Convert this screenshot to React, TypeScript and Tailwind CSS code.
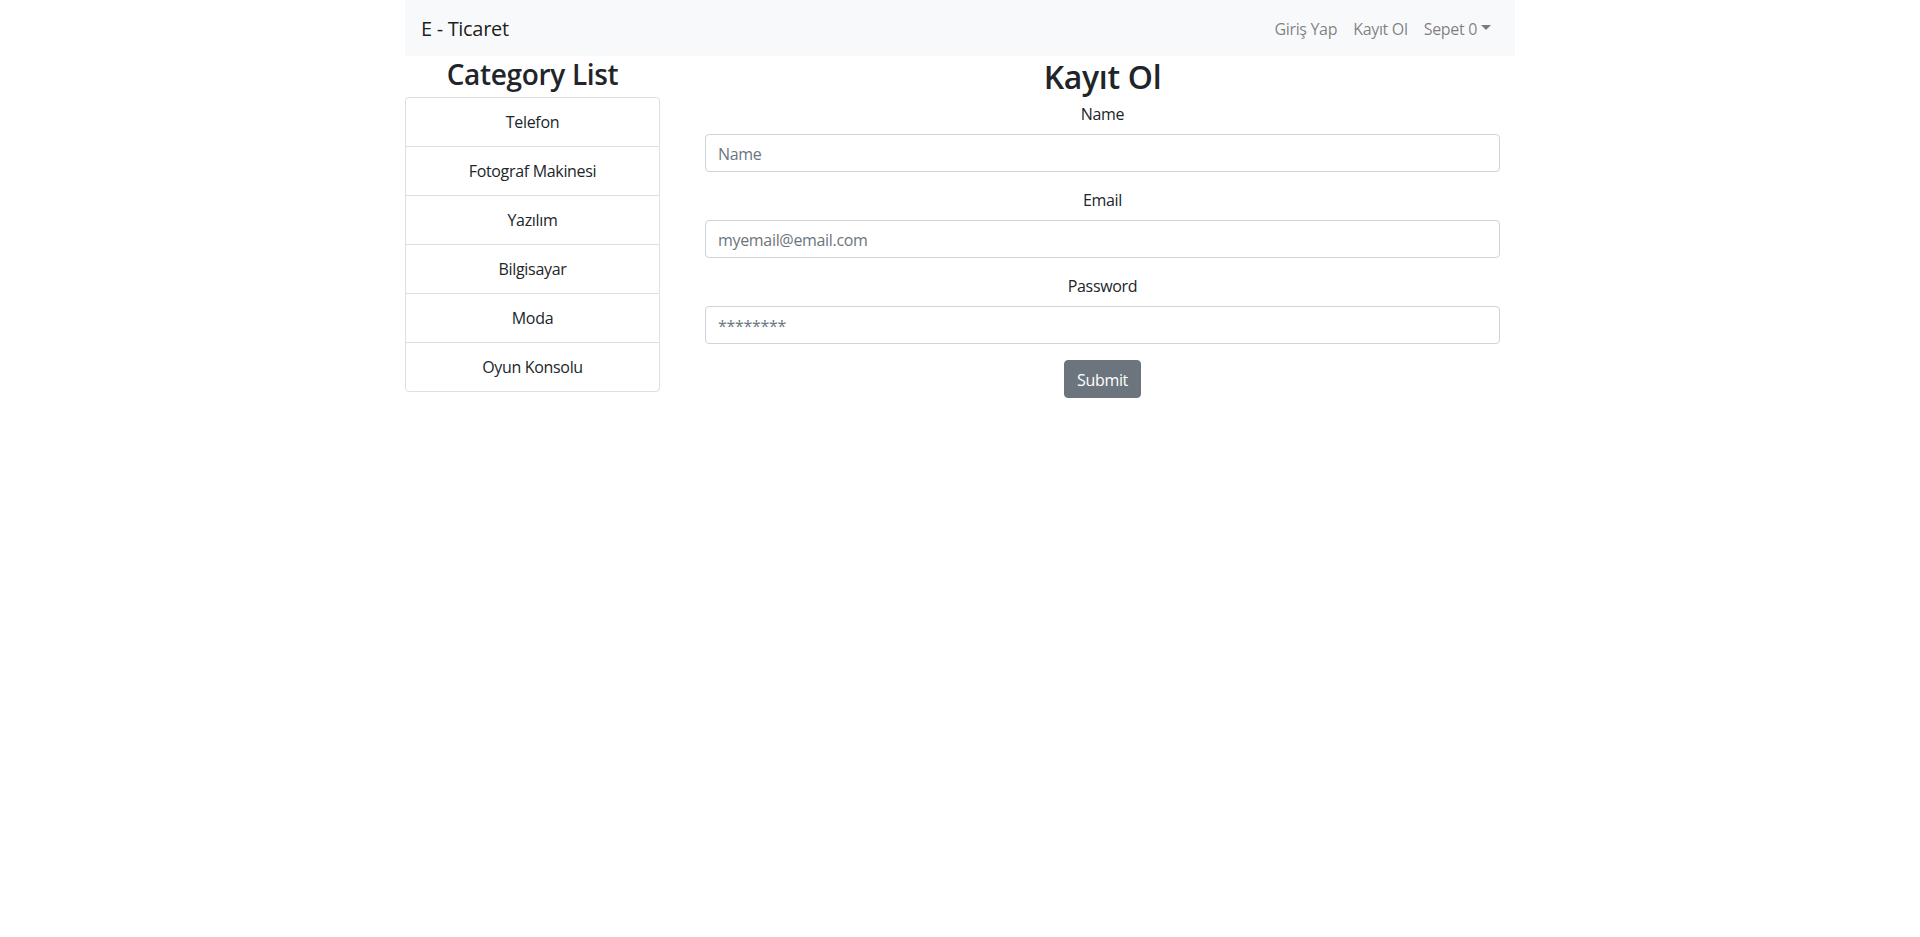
const categories = ['Telefon', 'Fotograf Makinesi', 'Yazılım', 'Bilgisayar', 'Moda', 'Oyun Konsolu'];

function Field({ label, placeholder, type }: { label: string; placeholder: string; type: string }) {
  return (
    <div className="mb-4">
      <label className="mb-2 block pt-px text-base leading-[23px]">{label}</label>
      <input
        type={type === 'password' ? 'text' : type}
        placeholder={placeholder}
        className="block h-[38px] w-full rounded border border-[#ced4da] bg-white px-3 pt-px text-left text-base tracking-[-0.02em] text-[#495057] placeholder:text-[#6c757d] focus:outline-none"
      />
    </div>
  );
}

export default function App() {
  return (
    <div className="min-h-screen bg-white font-['Open_Sans',sans-serif] text-base leading-6 tracking-[-0.02em] text-[#212529]">
      <div className="mx-auto w-[1140px] px-[15px]">
        <nav className="flex h-14 items-center justify-between bg-[#f8f9fa] px-4 pt-px">
          <a className="text-xl leading-[30px] text-black/90">E - Ticaret</a>
          <div className="flex items-center">
            <a className="px-2 text-black/50">Giriş Yap</a>
            <a className="px-2 text-black/50">Kayıt Ol</a>
            <a className="flex items-center px-2 text-black/50">
              Sepet 0
              <span className="ml-[4px] mt-[-3px] h-0 w-0 border-x-[5px] border-t-[5px] border-x-transparent border-t-black/50" />
            </a>
          </div>
        </nav>

        <div className="-mx-[15px] flex">
          <div className="w-3/12 px-[15px]">
            <h3 className="mb-2 pt-[3px] text-center text-[28px] font-semibold leading-[30px]">Category List</h3>
            <ul className="rounded border border-black/[0.125]">
              {categories.map((c, i) => (
                <li
                  key={c}
                  className={`px-5 pb-3 pt-[13px] leading-[23px] text-center ${i > 0 ? 'border-t border-black/[0.125]' : ''}`}
                >
                  {c}
                </li>
              ))}
            </ul>
          </div>

          <div className="w-9/12 px-[15px]">
            <div className="px-[15px] text-center">
              <h2 className="mb-2 pt-[3px] text-[32px] font-semibold leading-[35px]">Kayıt Ol</h2>
              <form>
                <Field label="Name" placeholder="Name" type="text" />
                <Field label="Email" placeholder="myemail@email.com" type="email" />
                <Field label="Password" placeholder="********" type="password" />
                <button
                  type="button"
                  className="h-[38px] rounded border border-[#6c757d] bg-[#6c757d] px-3 pt-px text-base text-white"
                >
                  Submit
                </button>
              </form>
            </div>
          </div>
        </div>
      </div>
    </div>
  );
}
